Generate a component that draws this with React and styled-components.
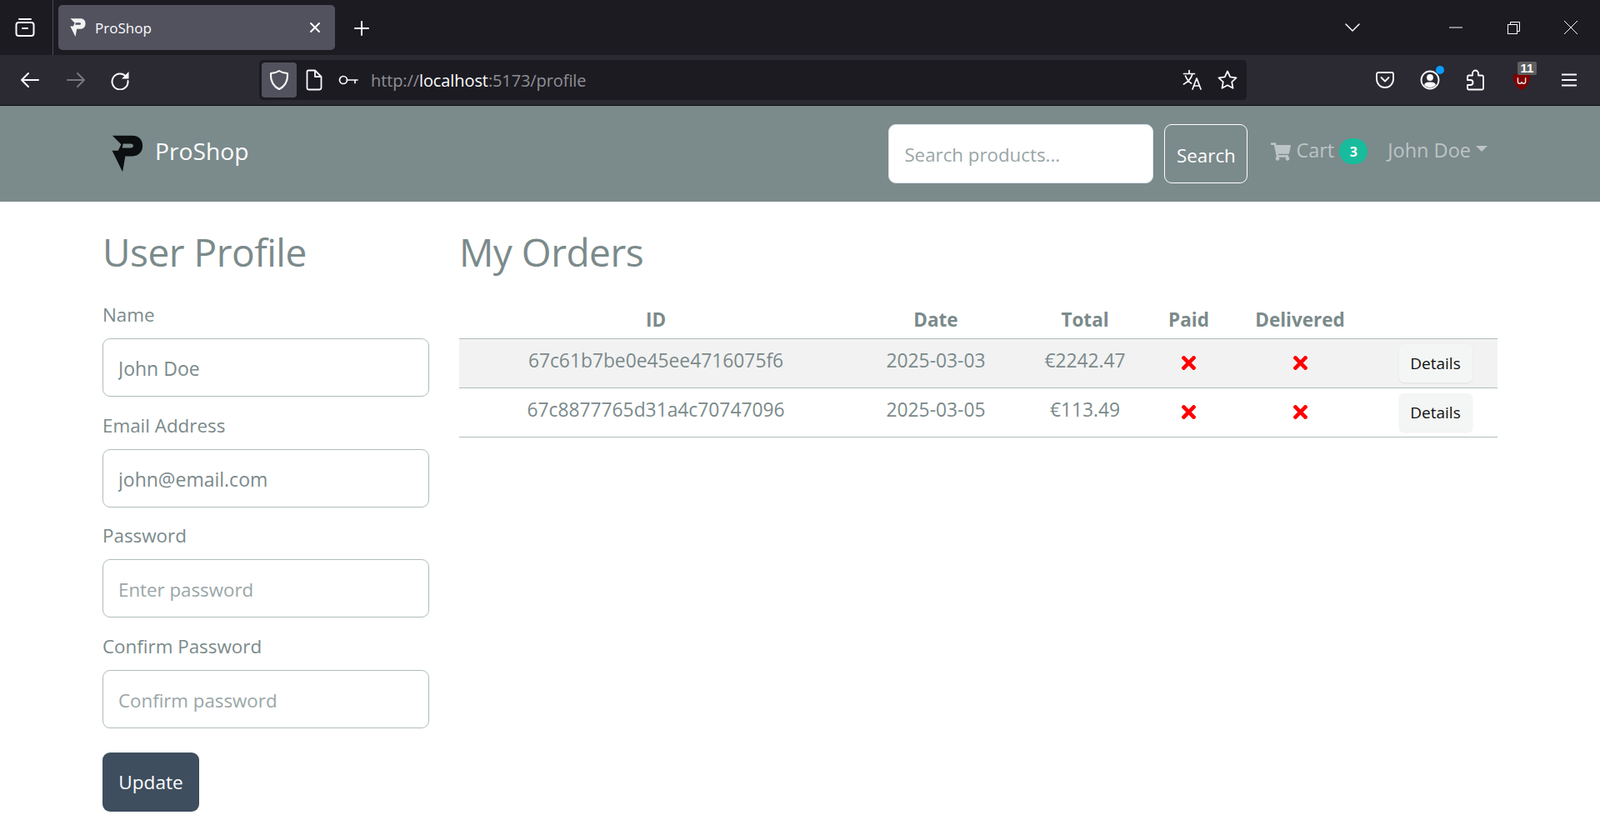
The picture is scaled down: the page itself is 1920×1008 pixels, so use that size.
import styled, { createGlobalStyle } from 'styled-components';
import { FaShoppingCart, FaTimes } from 'react-icons/fa';

const GlobalStyle = createGlobalStyle`
  * { box-sizing: border-box; }
  html, body { margin: 0; padding: 0; background: #fff; }
  body { font-family: "Open Sans", "Noto Sans", "Liberation Sans", sans-serif; color: #7b8a8b; }
`;

const Page = styled.div`
  width: 1920px;
  height: 1008px;
  overflow: hidden;
`;

/* browser chrome */
const TabStrip = styled.div`
  height: 66px;
  background: #1c1b22;
  display: flex;
  align-items: flex-start;
  color: #fbfbfe;
`;

const ViewSlot = styled.div`
  width: 64px;
  height: 66px;
  border-right: 1px solid #4a4a52;
  display: flex;
  align-items: center;
  justify-content: center;
  padding-right: 4px;
`;

const Tab = styled.div`
  width: 332px;
  height: 54px;
  margin: 6px 0 0 6px;
  padding: 0 17px 0 14px;
  border-radius: 5px;
  background: #52525e;
  display: flex;
  align-items: center;
  gap: 11px;
`;

const TabTitle = styled.span`
  flex: 1;
  font-size: 17px;
`;

const NewTab = styled.div`
  margin: 24px 0 0 22px;
  display: flex;
`;

const WindowButtons = styled.div`
  margin-left: auto;
  height: 66px;
  display: flex;
  align-items: center;
`;

const WindowIcon = styled.div`
  width: ${(p) => p.$w}px;
  margin-left: ${(p) => p.$gap || 0}px;
  display: flex;
  justify-content: center;
`;

const NavBar = styled.div`
  height: 61px;
  background: #2b2a33;
  border-bottom: 1px solid #0c0c0d;
  display: flex;
  align-items: center;
  color: #fbfbfe;
  padding-bottom: 1px;
`;

const NavButtons = styled.div`
  width: 311px;
  padding-left: 24px;
  display: flex;
  gap: 31px;
`;

const ReloadIcon = styled.svg`
  margin-left: -2px;
`;

const UrlBar = styled.div`
  width: 1185px;
  height: 48px;
  border-radius: 5px;
  background: #1c1b22;
  padding-left: 3px;
  padding-right: 11px;
  display: flex;
  align-items: center;
`;

const ShieldBox = styled.div`
  width: 42px;
  height: 42px;
  border-radius: 4px;
  background: #52525e;
  display: flex;
  align-items: center;
  justify-content: center;
  margin-right: 11px;
`;

const KeyIcon = styled.svg`
  margin-left: 19px;
`;

const UrlText = styled.div`
  flex: 1;
  margin-left: 15px;
  font-size: 20px;
  letter-spacing: -0.1px;
  padding-top: 1px;
  color: #8f8f94;
  b { font-weight: 400; color: #fbfbfe; }
`;

const UrlIcons = styled.div`
  display: flex;
  gap: 18px;
  align-items: center;
`;

const ToolIcons = styled.div`
  margin-left: 155px;
  display: flex;
  align-items: center;
  gap: 31px;
`;

const UblockWrap = styled.div`
  position: relative;
  width: 24px;
  height: 24px;
  display: flex;
  align-items: flex-end;
  justify-content: center;
`;

const UblockCount = styled.span`
  position: absolute;
  top: -10px;
  left: 7px;
  width: 23px;
  height: 16px;
  border-radius: 2px;
  background: #5f5f5f;
  color: #fff;
  font: 700 15px/16px "Liberation Sans", sans-serif;
  text-align: center;
`;

const MenuIcon = styled.svg`
  margin-left: 5px;
`;

const AccountWrap = styled.div`
  position: relative;
  display: flex;
`;

const Dot = styled.span`
  position: absolute;
  top: -5px;
  right: -5px;
  width: 10px;
  height: 10px;
  border-radius: 50%;
  background: #0a9dff;
`;

/* site header */
const Header = styled.header`
  height: 115px;
  background: #7b8a8b;
  padding: 0 135px 0 134px;
  display: flex;
  align-items: center;
`;

const Brand = styled.div`
  display: flex;
  align-items: center;
  gap: 14px;
  color: #fff;
  font-size: 28.2px;
`;

const BrandName = styled.span`
  margin-bottom: 7px;
`;

const SearchForm = styled.form`
  margin-left: auto;
  display: flex;
  gap: 13px;
  align-self: flex-start;
  padding-top: 22px;
`;

const SearchInput = styled.input`
  width: 318px;
  height: 71px;
  border: 1px solid #dce4ec;
  border-radius: 9px;
  background: #fff;
  padding: 2px 18px 0;
  font: 400 22.3px "Open Sans", sans-serif;
  color: #7b8a8b;
  &::placeholder { color: #9aa6a7; opacity: 1; }
`;

const SearchButton = styled.button`
  width: 100px;
  height: 71px;
  border: 1px solid #fff;
  border-radius: 9px;
  background: transparent;
  color: #fff;
  padding: 3px 0 0;
  font: 400 22.4px "Open Sans", sans-serif;
`;

const NavLink = styled.div`
  display: flex;
  align-items: center;
  margin-left: ${(p) => p.$left}px;
  color: #bdc4c5;
  font-size: 23.5px;
  margin-bottom: 9px;
`;

const CartIcon = styled(FaShoppingCart)`
  margin-right: 6px;
  margin-top: 3px;
  font-size: 24px;
`;

const Badge = styled.span`
  width: 34px;
  height: 31px;
  margin-left: 6px;
  margin-top: 3px;
  border-radius: 16px;
  background: #18bc9c;
  color: #fff;
  font-size: 16px;
  font-weight: 700;
  display: flex;
  align-items: center;
  justify-content: center;
`;

const Caret = styled.span`
  margin-left: 6px;
  margin-bottom: 4px;
  border-top: 7px solid #bdc4c5;
  border-left: 7px solid transparent;
  border-right: 7px solid transparent;
`;

/* page body */
const Main = styled.main`
  padding: 30px 123px 0;
  display: grid;
  grid-template-columns: 392px 1246px;
  column-gap: 36px;
`;

const Title = styled.h1`
  margin: 0 0 29px;
  font-size: 46px;
  letter-spacing: -0.5px;
  line-height: 60px;
  font-weight: 400;
  color: #7b8a8b;
`;

const Field = styled.div`
  margin-bottom: 17.67px;
`;

const Label = styled.label`
  display: block;
  font-size: 22.4px;
  line-height: 34px;
  margin-bottom: 11px;
  color: #7b8a8b;
`;

const Input = styled.input`
  display: block;
  width: 100%;
  height: 70px;
  border: 1px solid #b0bcbd;
  border-radius: 9px;
  padding: 2px 18px 0;
  background: #fff;
  font: 400 23px "Open Sans", sans-serif;
  color: #7b8a8b;
  &::placeholder { color: #9aa6a7; opacity: 1; font-size: 22.3px; }
`;

const UpdateButton = styled.button`
  margin-top: 11px;
  width: 116px;
  height: 71px;
  border: 0;
  border-radius: 9px;
  background: #3e4e5e;
  color: #fff;
  font: 400 22.6px "Open Sans", sans-serif;
`;

const Table = styled.table`
  width: 1246px;
  table-layout: fixed;
  border-collapse: collapse;
  margin-top: 33px;
`;

const HeadCell = styled.th`
  height: 41px;
  padding: 0 0 4px;
  font-size: 22.5px;
  font-weight: 700;
  color: #7b8a8b;
  text-align: center;
  border-bottom: 1px solid #b0bcbd;
`;

const Row = styled.tr`
  background: ${(p) => (p.$striped ? '#f2f2f2' : '#fff')};
`;

const Cell = styled.td`
  height: 57.5px;
  padding: 0 0 ${(p) => p.$nudge || 6}px;
  font-size: 22.8px;
  color: #7b8a8b;
  text-align: center;
  border-bottom: 1px solid #b0bcbd;
`;

const Cross = styled(FaTimes)`
  display: block;
  margin: 0 auto;
  color: #f00;
  font-size: 25px;
`;

const DetailsButton = styled.button`
  width: 88px;
  height: 46px;
  margin-top: 6px;
  border: 0;
  border-radius: 6px;
  background: #f4f5f5;
  box-shadow: 0 1px 2px rgba(0, 0, 0, 0.08);
  color: #111;
  padding: 0;
  font: 400 19px "Open Sans", sans-serif;
`;

const stroke = { fill: 'none', stroke: 'currentColor', strokeWidth: 2, strokeLinecap: 'round', strokeLinejoin: 'round' };

const Logo = ({ size = 38, color = '#0b0f0f' }) => (
  <svg width={size} height={size * 1.18} viewBox="43 38 114 136">
    <path fillRule="evenodd" fill={color} d="M45 40H118C142 40 155 55 155 77C155 100 140 115 118 115H92L82 172L44 95H66L77 72ZM84 70L81 85H112C118 85 121 82 121 77C121 73 118 70 112 70Z" />
  </svg>
);

const orders = [
  { id: '67c61b7be0e45ee4716075f6', date: '2025-03-03', total: '€2242.47' },
  { id: '67c8877765d31a4c70747096', date: '2025-03-05', total: '€113.49' },
];

const App = () => {
  return (
    <Page>
      <GlobalStyle />
      <TabStrip>
        <ViewSlot>
          <svg width="24" height="24" viewBox="0 0 24 24" {...stroke}>
            <rect x="1.5" y="6" width="21" height="16" rx="3" />
            <path d="M5 2h14M9 13h6" />
          </svg>
        </ViewSlot>
        <Tab>
          <Logo size={19} color="#f2f2f2" />
          <TabTitle>ProShop</TabTitle>
          <svg width="14" height="14" viewBox="0 0 14 14" {...stroke}>
            <path d="M2 2l10 10M12 2L2 12" />
          </svg>
        </Tab>
        <NewTab>
          <svg width="20" height="20" viewBox="0 0 20 20" {...stroke}>
            <path d="M10 2v16M2 10h16" />
          </svg>
        </NewTab>
        <WindowButtons>
          <WindowIcon $w={70}>
            <svg width="20" height="12" viewBox="0 0 20 12" {...stroke} strokeWidth="1.5">
              <path d="M2 2l8 8 8-8" />
            </svg>
          </WindowIcon>
          <WindowIcon $w={70} $gap={54}>
            <svg width="16" height="2" viewBox="0 0 16 2"><path d="M0 1h16" stroke="currentColor" strokeWidth="1" /></svg>
          </WindowIcon>
          <WindowIcon $w={68}>
            <svg width="15" height="15" viewBox="0 0 15 15" fill="none" stroke="currentColor">
              <rect x="0.5" y="3.5" width="11" height="11" />
              <path d="M3.5 3.5V.5h11v11h-3" />
            </svg>
          </WindowIcon>
          <WindowIcon $w={70}>
            <svg width="16" height="16" viewBox="0 0 16 16" fill="none" stroke="currentColor">
              <path d="M0 0l16 16M16 0L0 16" />
            </svg>
          </WindowIcon>
        </WindowButtons>
      </TabStrip>

      <NavBar>
        <NavButtons>
          <svg width="24" height="24" viewBox="0 0 24 24" {...stroke}>
            <path d="M2 12h20M10 4l-8 8 8 8" />
          </svg>
          <svg width="24" height="24" viewBox="0 0 24 24" {...stroke} color="#77767d">
            <path d="M2 12h20M14 4l8 8-8 8" />
          </svg>
          <ReloadIcon width="24" height="24" viewBox="0 0 24 24">
            <path d="M19 7.5A9.5 9.5 0 1 0 21.5 13" {...stroke} />
            <path d="M22.5 2v8.5H14z" fill="currentColor" />
          </ReloadIcon>
        </NavButtons>
        <UrlBar>
          <ShieldBox>
            <svg width="24" height="26" viewBox="0 0 24 26" {...stroke}>
              <path d="M12 2c3 2 6 3 10 3 .5 8-2 15-10 19C4 20 1.500 13 2 5c4 0 7-1 10-3z" />
            </svg>
          </ShieldBox>
          <svg width="20" height="26" viewBox="0 0 20 26" {...stroke} strokeWidth="1.8">
            <path d="M3 1.500h8l7.500 7.500v13a2.500 2.500 0 0 1-2.500 2.500H3A2 2 0 0 1 1.500 22.500V3A1.500 1.500 0 0 1 3 1.500zM11 2v7h7" />
          </svg>
          <KeyIcon width="24" height="14" viewBox="0 0 24 14" {...stroke} strokeWidth="1.7">
            <circle cx="6" cy="7" r="4.500" />
            <path d="M10.500 7H23M20 7v3.500" />
          </KeyIcon>
          <UrlText>http://<b>localhost</b>:5173/profile</UrlText>
          <UrlIcons>
            <svg width="24" height="26" viewBox="0 0 24 26" {...stroke} strokeWidth="1.7">
              <path d="M1.500 5.500h13M8 1.500v4M12 5.500C10.500 11 7 15 1.500 18M3.500 8c1.500 4 4 7 7 9M12 24l5-13 5 13M14 20h6" />
            </svg>
            <svg width="24" height="24" viewBox="0 0 24 24" {...stroke} strokeWidth="1.8">
              <path d="M12 1.500l3.200 6.800 7.300 1-5.300 5.100 1.300 7.400L12 18.300l-6.500 3.500 1.300-7.400L1.500 9.300l7.300-1z" />
            </svg>
          </UrlIcons>
        </UrlBar>
        <ToolIcons>
          <svg width="22" height="22" viewBox="0 0 22 22" {...stroke} strokeWidth="1.8">
            <path d="M3 2h16a2 2 0 0 1 2 2v6a10 10 0 0 1-20 0V4a2 2 0 0 1 2-2zM6.500 8l4.500 4.500L15.500 8" />
          </svg>
          <AccountWrap>
            <svg width="24" height="24" viewBox="0 0 24 24" {...stroke} strokeWidth="1.8">
              <circle cx="12" cy="12" r="10.500" />
              <circle cx="12" cy="9" r="3" fill="currentColor" />
              <path d="M5 18c1-3 3-3.500 7-3.500S18 15 19 18c-2 2-4 3-7 3s-5-1-7-3z" fill="currentColor" stroke="none" />
            </svg>
            <Dot />
          </AccountWrap>
          <svg width="24" height="26" viewBox="0 0 24 26" {...stroke} strokeWidth="1.8">
            <path d="M3 24.500a1.500 1.500 0 0 1-1-1.500v-4h3.500a3 3 0 0 0 0-6H2V9a1.500 1.500 0 0 1 1.500-1.500H8V5a3.500 3.500 0 0 1 7 0v2.500h4A2 2 0 0 1 21 9.500V23a1.500 1.500 0 0 1-1.500 1.500z" />
          </svg>
          <UblockWrap>
            <svg width="22" height="22" viewBox="0 0 24 24">
              <path d="M12 1c3 1.500 7 2.500 11 2.500C23.500 13 20 20 12 24 4 20 .5 13 1 3.500 5 3.500 9 2.500 12 1z" fill="#800000" />
              <path d="M7 8v5a2 2 0 0 0 5 0 2 2 0 0 0 5 0V8" fill="none" stroke="#eee" strokeWidth="1.500" />
            </svg>
            <UblockCount>11</UblockCount>
          </UblockWrap>
          <MenuIcon width="18" height="16" viewBox="0 0 18 16" stroke="currentColor" strokeWidth="2">
            <path d="M0 1.500h18M0 8h18M0 14.500h18" />
          </MenuIcon>
        </ToolIcons>
      </NavBar>

      <Header>
        <Brand>
          <Logo />
          <BrandName>ProShop</BrandName>
        </Brand>
        <SearchForm>
          <SearchInput placeholder="Search products..." />
          <SearchButton type="button">Search</SearchButton>
        </SearchForm>
        <NavLink $left={28}>
          <CartIcon />
          Cart
          <Badge>3</Badge>
        </NavLink>
        <NavLink $left={24}>
          John Doe
          <Caret />
        </NavLink>
      </Header>

      <Main>
        <section>
          <Title>User Profile</Title>
          <form>
            <Field>
              <Label>Name</Label>
              <Input defaultValue="John Doe" />
            </Field>
            <Field>
              <Label>Email Address</Label>
              <Input defaultValue="john@email.com" />
            </Field>
            <Field>
              <Label>Password</Label>
              <Input type="password" placeholder="Enter password" />
            </Field>
            <Field>
              <Label>Confirm Password</Label>
              <Input type="password" placeholder="Confirm password" />
            </Field>
            <UpdateButton type="button">Update</UpdateButton>
          </form>
        </section>
        <section>
          <Title>My Orders</Title>
          <Table>
            <colgroup>
              <col width="472" />
              <col width="200" />
              <col width="158" />
              <col width="91" />
              <col width="176" />
              <col width="149" />
            </colgroup>
            <thead>
              <tr>
                <HeadCell>ID</HeadCell>
                <HeadCell>Date</HeadCell>
                <HeadCell>Total</HeadCell>
                <HeadCell>Paid</HeadCell>
                <HeadCell>Delivered</HeadCell>
                <HeadCell />
              </tr>
            </thead>
            <tbody>
              {orders.map((order, i) => (
                <Row key={order.id} $striped={i === 0}>
                  <Cell>{order.id}</Cell>
                  <Cell>{order.date}</Cell>
                  <Cell>{order.total}</Cell>
                  <Cell $nudge={1}><Cross /></Cell>
                  <Cell $nudge={1}><Cross /></Cell>
                  <Cell $nudge={6}><DetailsButton type="button">Details</DetailsButton></Cell>
                </Row>
              ))}
            </tbody>
          </Table>
        </section>
      </Main>
    </Page>
  );
};

export default App;
